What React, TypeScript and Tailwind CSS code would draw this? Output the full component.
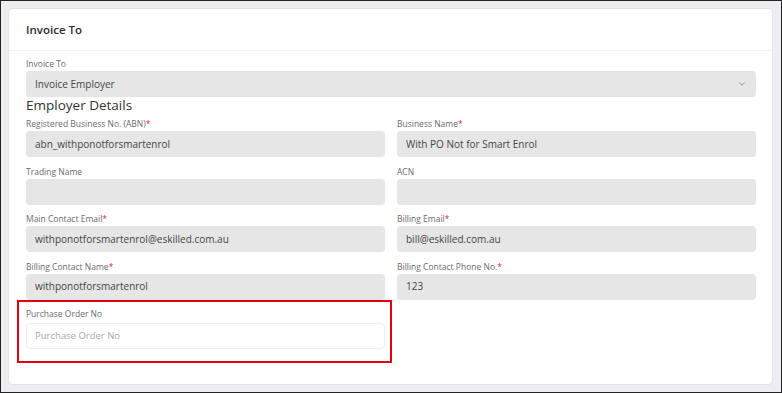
import React from "react";
import { ChevronDown } from "lucide-react";

const font = { fontFamily: '"Open Sans", "Noto Sans", sans-serif' };

type FieldProps = {
  label: string;
  value?: string;
  required?: boolean;
};

const Field = ({ label, value, required }: FieldProps) => {
  return (
    <div>
      <div className="text-[8.5px] leading-[12px] text-[#6b6b6b] mb-[1px]">
        {label}
        {required && <span className="text-[#e0245e]">*</span>}
      </div>
      <div className="h-[26px] rounded-[4px] bg-[#e6e6e6] px-[9px] flex items-center text-[10px] font-medium text-[#454545]">
        {value}
      </div>
    </div>
  );
};

const App = () => {
  return (
    <div
      className="w-[782px] h-[393px] border border-[#222] bg-[#eceef1] pt-[7px] pl-[7px] pr-[8px] pb-[7px]"
      style={font}
    >
      <div className="h-full bg-white rounded-[4px] border border-[#e3e5e8] flex flex-col">
        <div className="h-[42px] flex items-center px-[17px] border-b border-[#f1f2f4]">
          <h2 className="text-[11.5px] font-semibold text-[#2b2b2b]">Invoice To</h2>
        </div>
        <div className="pt-[7px] pl-[17px] pr-[16px]">
          <div className="text-[8.5px] leading-[12px] text-[#6b6b6b] mb-[1px]">
            Invoice To
          </div>
          <div className="h-[26px] rounded-[4px] bg-[#e6e6e6] px-[9px] flex items-center justify-between text-[10px] font-medium text-[#454545]">
            <span>Invoice Employer</span>
            <ChevronDown size={10} className="text-[#8a8a8a]" />
          </div>
          <h3 className="text-[13.5px] leading-[16px] text-[#333] mb-[5px]">
            Employer Details
          </h3>
          <div className="grid grid-cols-2 gap-x-3 gap-y-[8.5px]">
            <Field
              label="Registered Business No. (ABN)"
              required
              value="abn_withponotforsmartenrol"
            />
            <Field label="Business Name" required value="With PO Not for Smart Enrol" />
            <Field label="Trading Name" />
            <Field label="ACN" />
            <Field
              label="Main Contact Email"
              required
              value="withponotforsmartenrol@eskilled.com.au"
            />
            <Field label="Billing Email" required value="bill@eskilled.com.au" />
            <Field
              label="Billing Contact Name"
              required
              value="withponotforsmartenrol"
            />
            <Field label="Billing Contact Phone No." required value="123" />
            <div className="relative">
              <div className="text-[8.5px] leading-[12px] text-[#6b6b6b] mb-[1px]">
                Purchase Order No
              </div>
              <input
                className="w-full h-[26px] rounded-[4px] bg-white border border-[#eeeeee] px-[8px] text-[9.5px] text-[#4a4a4a] placeholder:text-[#a9a9b0] outline-none"
                placeholder="Purchase Order No"
                style={font}
              />
              <div className="absolute top-[-8px] left-[-9px] right-[-7px] bottom-[-14px] border-2 border-[#e3000f]" />
            </div>
          </div>
        </div>
      </div>
    </div>
  );
};

export default App;
